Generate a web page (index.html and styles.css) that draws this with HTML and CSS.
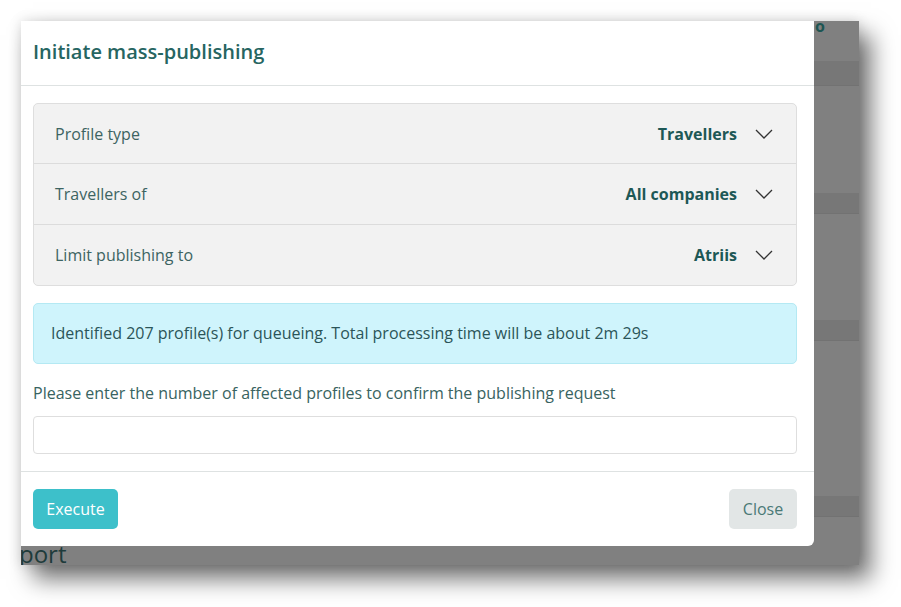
FILE: index.html
```html
<!DOCTYPE html>
<html lang="en">
<head>
    <meta charset="UTF-8">
    <title>Initiate mass-publishing</title>
    <link rel="stylesheet" href="styles.css">
</head>
<body>
<div class="shot">
    <div class="page">
        <div class="page-top"><span class="page-link">o</span></div>
        <div class="band band-1"></div>
        <div class="band band-2"></div>
        <div class="band band-3"></div>
        <div class="band band-4"></div>
        <div class="page-heading">port</div>
    </div>

    <div class="modal">
        <div class="modal-header">
            <h5 class="modal-title">Initiate mass-publishing</h5>
        </div>
        <div class="modal-body">
            <div class="options">
                <div class="option">
                    <span class="option-label">Profile type</span>
                    <span class="option-value">Travellers</span>
                    <svg class="chevron" width="18" height="10" viewBox="0 0 18 10"><polyline points="1,1 9,9 17,1" fill="none" stroke="#333" stroke-width="1.3"/></svg>
                </div>
                <div class="option">
                    <span class="option-label">Travellers of</span>
                    <span class="option-value">All companies</span>
                    <svg class="chevron" width="18" height="10" viewBox="0 0 18 10"><polyline points="1,1 9,9 17,1" fill="none" stroke="#333" stroke-width="1.3"/></svg>
                </div>
                <div class="option">
                    <span class="option-label">Limit publishing to</span>
                    <span class="option-value">Atriis</span>
                    <svg class="chevron" width="18" height="10" viewBox="0 0 18 10"><polyline points="1,1 9,9 17,1" fill="none" stroke="#333" stroke-width="1.3"/></svg>
                </div>
            </div>

            <div class="alert-info">Identified 207 profile(s) for queueing. Total processing time will be about 2m 29s</div>

            <label class="confirm-label" for="confirmCount">Please enter the number of affected profiles to confirm the publishing request</label>
            <input class="confirm-input" id="confirmCount" type="text">
        </div>
        <div class="modal-footer">
            <button class="btn btn-execute">Execute</button>
            <button class="btn btn-close">Close</button>
        </div>
    </div>
</div>
</body>
</html>
```

FILE: styles.css
```css
body {
    margin: 0;
    min-height: 607px;
    background: #ffffff;
    font-family: "Open Sans", "Noto Sans", sans-serif;
}
.shot {
    position: relative;
    margin: 21px 0 0 21px;
    width: 838px;
    height: 544px;
    background: #808080;
    overflow: hidden;
    box-shadow: 12px 14px 22px rgba(0,0,0,.55), 0 0 12px rgba(0,0,0,.14);
}
.page-top {
    height: 40px;
    position: relative;
}
.page-link {
    position: absolute;
    left: 794px; top: -3px;
    color: #1d5552;
    font-weight: 700;
    font-size: 16px;
    line-height: 16px;
}
.band { height: 24px; background: #777777; border-bottom: 1px solid #727272; }
.band-2 { margin-top: 107px; height: 20px; }
.band-3 { margin-top: 106px; height: 20px; }
.band-4 { margin-top: 155px; height: 20px; }
.page-heading {
    margin: 22px 0 0 -2px;
    font-size: 24px;
    line-height: 30px;
    color: #1e3b3b;
}

/* modal over the page */
.modal {
    position: absolute;
    left: 0; top: 0;
    width: 793px;
    background: #ffffff;
    border-radius: 0 0 6px 0;
}
.modal-header {
    padding: 16px 12px 18px;
    border-bottom: 1px solid #dee2e2;
}
.modal-title {
    margin: 0;
    font-size: 20px;
    line-height: 30px;
    font-weight: 600;
    color: #266561;
}
.modal-body {
    padding: 17px 17px 17px 12px;
}
.options {
    background: #f2f2f2;
    border: 1px solid #dedede;
    border-radius: 5px;
}
.option {
    display: flex;
    align-items: center;
    height: 60px;
    padding: 0 23px 0 21px;
    border-top: 1px solid #dcdcdc;
    font-size: 16px;
}
.option:first-child { border-top: none; height: 59px; }
.option-label { flex: 1; color: #3d6462; }
.option-value { font-weight: 700; color: #1d5856; margin-right: 18px; }
.chevron { display: block; }

.alert-info {
    margin-top: 17px;
    padding: 17px 17px;
    background: #cff4fc;
    border: 1px solid #b4e9f3;
    border-radius: 5px;
    font-size: 16px;
    line-height: 25px;
    color: #2b5558;
}
.confirm-label {
    display: block;
    margin: 17px 0 11px;
    font-size: 16px;
    line-height: 24px;
    color: #386361;
}
.confirm-input {
    display: block;
    box-sizing: border-box;
    width: 100%;
    height: 38px;
    border: 1px solid #dedede;
    border-radius: 4px;
    background: #ffffff;
    outline: none;
}
.modal-footer {
    display: flex;
    justify-content: space-between;
    padding: 17px 17px 17px 12px;
    border-top: 1px solid #dee2e2;
}
.btn {
    height: 40px;
    border: none;
    border-radius: 5px;
    font-family: inherit;
    font-size: 16px;
    padding: 0 10px;
    cursor: pointer;
}
.btn-execute { background: #3dc0ca; color: #ffffff; width: 85px; }
.btn-close { background: #e2e6e6; color: #4a7976; width: 68px; }
```
